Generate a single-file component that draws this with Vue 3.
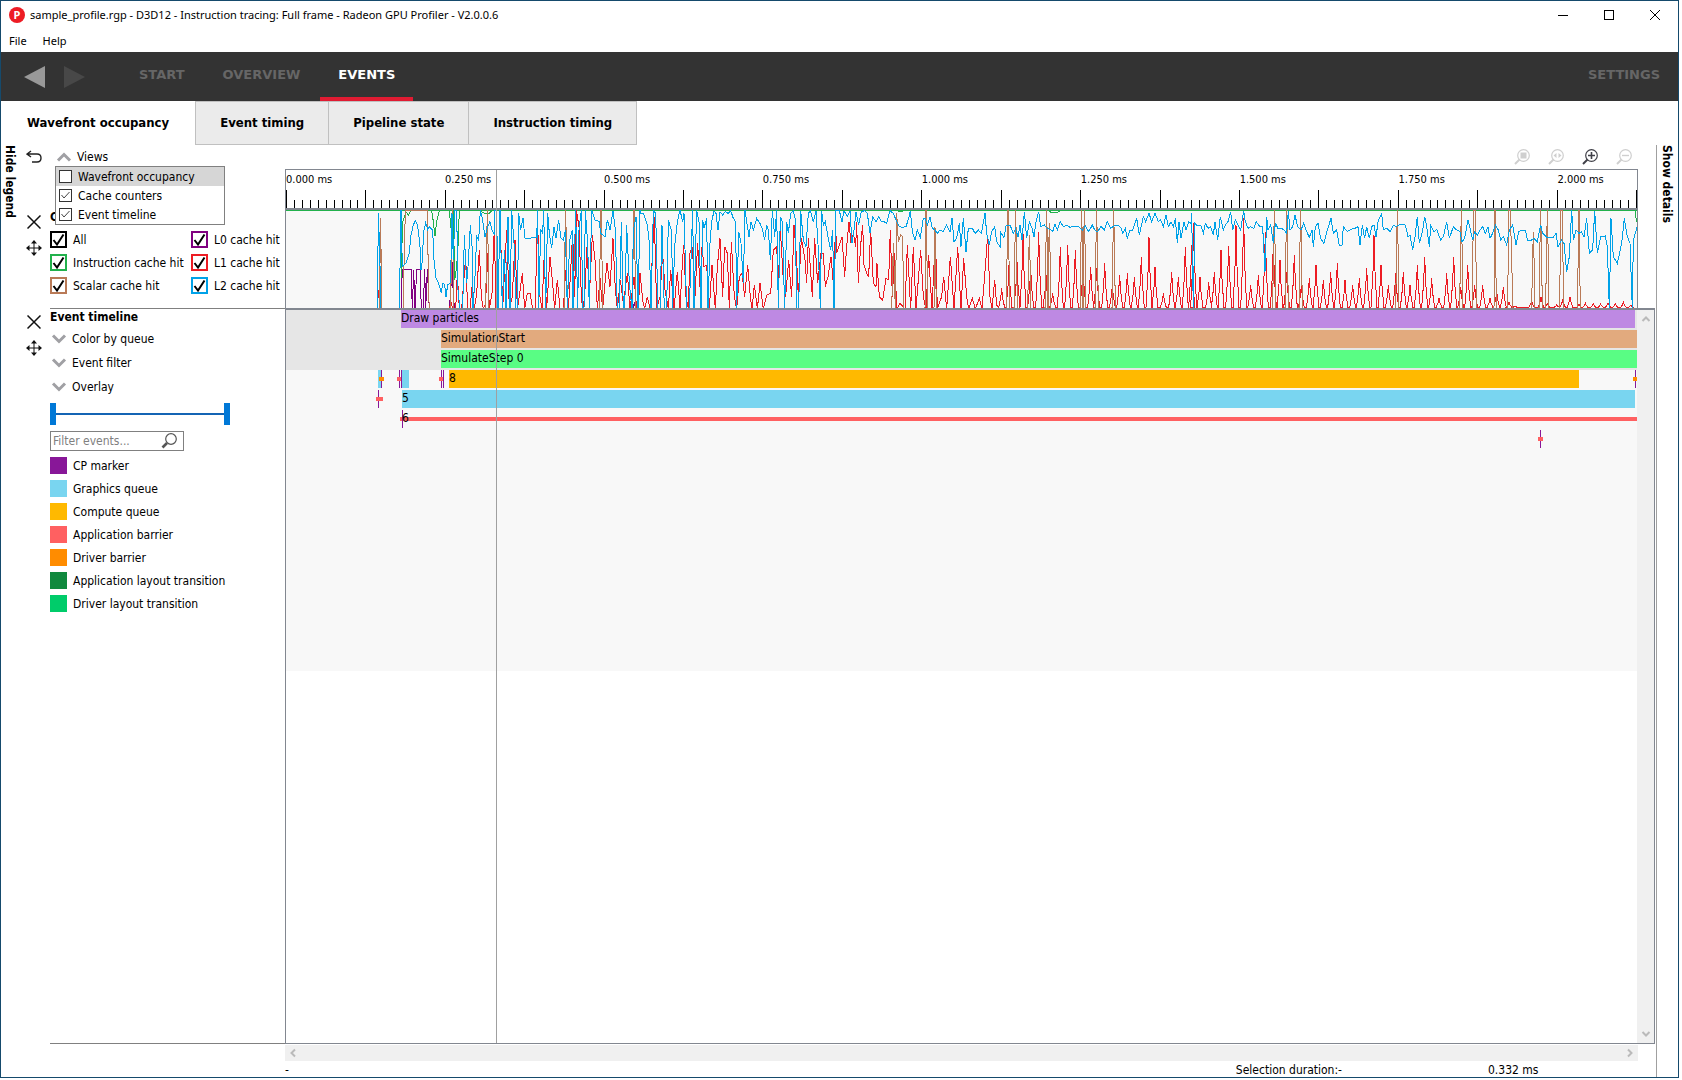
<script setup>
import { ref } from 'vue'

const navItems = ['START', 'OVERVIEW', 'EVENTS']
const tabs = ['Wavefront occupancy', 'Event timing', 'Pipeline state', 'Instruction timing']

const views = ref([
  { name: 'Wavefront occupancy', on: false },
  { name: 'Cache counters', on: true },
  { name: 'Event timeline', on: true },
])

const counters = ref([
  { name: 'All', color: '#000000', on: true },
  { name: 'L0 cache hit', color: '#800080', on: true },
  { name: 'Instruction cache hit', color: '#22b14c', on: true },
  { name: 'L1 cache hit', color: '#ed1c24', on: true },
  { name: 'Scalar cache hit', color: '#b97a57', on: true },
  { name: 'L2 cache hit', color: '#00a2e8', on: true },
])

const foldouts = ['Color by queue', 'Event filter', 'Overlay']

const legend = [
  ['CP marker', '#881798'],
  ['Graphics queue', '#79d5f0'],
  ['Compute queue', '#ffb900'],
  ['Application barrier', '#ff6061'],
  ['Driver barrier', '#ff8c00'],
  ['Application layout transition', '#10893e'],
  ['Driver layout transition', '#00cc6a'],
]

// Time axis: 170 divisions of 0.0125 ms
const DIVISIONS = 170
const ticks = Array.from({ length: DIVISIONS + 1 }, (_, i) => ({
  x: (i / DIVISIONS) * 1350 + 0.5,
  top: i % 10 === 0 ? 0 : 10,
}))
const marks = Array.from({ length: 9 }, (_, i) => ({
  left: ((i * 20) / DIVISIONS) * 100 + '%',
  text: (i * 0.25).toFixed(3) + ' ms',
}))

// Samples are recorded in four blocks, each with its own origin.
// Zero values sit just below the visible plot.
const FLOOR = 297
const BLOCKS = [[-18, 180], [1062, 180], [2142, 180], [3162, 240]]
function samples(block, text) {
  const [dx, dy] = BLOCKS[block]
  return text.trim().split(/\s+/).map((p) => {
    const [x, y] = p.split(',').map(Number)
    return `${x + dx},${y - dy >= 293 ? FLOOR : y - dy}`
  }).join(' ')
}
// Narrow pulses rising from the base line
function pulses(block, text, half, base = FLOOR) {
  const [dx, dy] = BLOCKS[block]
  return text.trim().split(/\s+/).map((p) => {
    const [x, y] = p.split(',').map(Number)
    const mid = (y - dy + base) / 2
    return `${x + dx - half},${base} ${x + dx - 3},${mid} ${x + dx},${y - dy} ${x + dx + 3},${mid} ${x + dx + half},${base}`
  }).join(' ')
}

const l2 = [
  samples(0, `291,474 293,400 295,190 299,300 303,474 358,474 363,180 367,350 372,345 378,340 388,310 392,260 400,225 406,212 412,225 416,250
  420,290 423,360 428,325 430,250 437,218 443,238 448,230 458,240 462,330 468,385 476,400 484,430 488,400 494,403 498,440 503,405 510,400
  513,330 516,190 520,330 525,180 530,182 534,420 540,474 548,474 553,255 560,400 564,350 571,225 577,300 579,474 585,380 590,260 596,270
  601,180 607,205 615,262 622,232 630,215 636,240 643,255 645,180 650,180 654,474 660,180 667,474 673,300 678,474 684,200 690,474 695,180
  702,280 708,474 712,474 716,190 722,240 729,205 735,265 745,265 770,262 773,180 776,474 782,240 788,250 791,180 797,474 803,190 808,250
  815,295 822,230 828,265 836,210 843,265 850,270 856,240 862,474 869,270 877,240 879,474 887,180 893,474 897,240 904,180 908,474 912,474
  916,180 923,280 928,474 935,180 945,210 958,215 962,250 975,260 982,210 990,240 999,183 1006,240 1012,474 1018,474 1024,215 1030,474
  1034,474 1040,225 1048,400 1056,474 1060,240 1068,200 1074,474 1080,180`),
  samples(1, `0,190 10,190 22,225 28,280 33,474 40,180 47,190 54,474 60,474 66,225 73,474 80,474 85,210 95,245 98,474 104,290 112,215
  120,180 128,215 132,190 140,474 148,474 158,180 162,474 170,180 177,215 183,474 188,210 192,235 200,205 204,474 210,280 215,215 222,183
  228,190 234,240 240,185 248,195 256,185 264,190 272,182 280,205 287,215 290,474 296,245 303,280 310,400 315,180 320,215 327,260 333,215
  340,240 350,205 360,220 368,240 374,270 380,225 385,240 391,330 397,182 404,260 410,180 415,474 421,200 427,215 434,474 440,215 445,250
  452,190 460,182 466,210 470,474 476,474 482,182 490,270 498,290 505,190 511,182 520,215 528,182 535,300 541,474 545,182 550,225 556,215
  564,260 572,300 578,240 582,474 588,182 598,182 606,215 612,182 622,200 630,182 636,280 642,240 648,185 656,225 664,185 674,182 682,190
  690,250 698,200 708,215 716,200 724,215 732,215 740,220 750,182 760,190 768,210 778,230 788,232 798,230 806,205 811,182 817,245 825,270
  832,240 841,262 850,205 856,205 862,225 870,200 877,235 885,240 892,250 900,240 910,245 920,225 930,245 936,205 942,275 950,265 958,220
  963,290 970,205 978,305 985,235 997,235 1005,250 1015,240 1024,250 1035,190 1040,250 1048,285 1055,245 1064,230 1070,275 1080,290`),
  samples(2, `0,245 12,262 18,228 30,225 40,250 47,235 54,262 60,225 66,270 73,185 80,265 88,215 96,235 102,260 108,215 116,185 122,230
  133,225 142,235 150,238 158,245 165,222 172,240 181,215 190,230 200,225 210,232 220,228 235,230 247,240 256,228 266,245 277,225 284,240
  292,245 303,230 313,240 322,215 332,235 345,225 353,225 362,232 368,250 376,235 382,265 390,240 398,240 410,205 418,255 430,200 437,215
  447,190 455,215 465,190 475,215 482,210 490,230 498,195 505,230 513,215 520,230 526,205 532,280 537,215 543,265 552,215 558,240 566,215
  573,220 575,190 580,474 584,220 592,228 602,225 610,250 616,220 624,235 632,230 640,255 645,215 653,270 661,200 670,240 676,225 684,215
  692,185 698,240 706,210 712,220 722,240 731,182 736,215 744,235 752,230 762,235 768,215 778,228 788,230 795,365 800,200 804,240 812,225
  820,280 826,220 834,235 845,235 852,240 860,250 865,182 870,240 878,230 885,195 893,230 903,240 911,220 918,240 928,262 936,240 940,290
  946,230 954,220 962,265 972,280 982,240 993,205 1000,250 1010,240`),
  samples(3, `-2,348 6,345 10,290 22,305 32,298 45,295 54,290 60,345 67,285 74,325 80,290 88,325 95,290 102,285 108,320 115,270 125,250
  130,300 140,295 150,305 160,285 168,290 176,285 186,283 196,285 204,320 210,315 218,360 225,320 232,260 238,340 248,300 254,260 260,290
  268,350 272,285 282,305 290,298 302,330 310,320 320,275 328,325 340,290 350,300 360,305 366,335 374,325 384,270 390,295 398,330 404,305
  412,315 420,300 428,290 436,310 444,290 450,325 458,310 466,285 475,300 482,330 490,320 500,345 508,300 518,285 528,345 536,305 546,300
  556,300 562,330 575,330 582,325 592,335 602,285 608,310 620,322 640,322 648,310 654,350 664,330 672,340 680,425 688,380 695,240 700,330
  708,300 717,310 724,305 732,320 740,265 748,370 758,360 764,242 772,370 782,320 796,318 802,350 808,534 813,265 820,380 832,400 845,340
  853,265 862,320 870,340 877,534 880,330 886,310 891,290`),
].join(' ')

const l1 = [
  samples(0, `291,474 295,420 300,474 508,474 513,455 518,474 527,474 532,370 538,474 545,474 557,320 563,474 570,474 577,400 583,474
  590,430 598,300 604,440 610,474 617,460 622,310 628,474 636,430 643,230 648,474 655,380 661,225 668,474 680,240 688,474 697,440 705,270
  712,474 719,430 727,370 734,474 742,430 750,430 758,474 766,474 772,190 780,440 786,474 792,330 800,474 810,320 818,400 824,474 832,390
  840,474 850,474 857,360 865,474 871,380 878,250 884,440 889,180 897,230 904,440 908,474 914,440 921,290 928,440 937,255 945,330 952,474
  960,385 968,474 975,400 981,340 990,410 999,265 1006,420 1012,474 1021,390 1030,460 1042,370 1050,474 1062,380 1070,474 1078,430`),
  samples(1, `0,370 8,450 14,474 22,440 30,474 36,340 43,200 50,474 60,440 68,310 75,420 85,474 92,360 102,474 112,365 120,474 127,340
  131,285 138,440 145,474 150,310 157,290 165,440 173,280 180,410 186,290 192,350 200,345 208,474 216,345 226,474 232,350 240,265 248,440
  254,290 262,310 268,474 274,275 283,440 290,474 298,380 306,370 314,440 323,345 331,440 336,474 343,405 352,474 360,400 370,474 380,435
  392,430 400,300 410,290 415,400 421,240 430,390 437,440 446,330 455,440 462,225 470,330 475,440 484,265 495,330 500,400 505,265 517,440
  524,265 533,400 543,310 550,310 556,410 564,380 573,320 580,400 587,230 590,310 598,285 606,260 614,380 620,290 627,215 633,280 640,250
  647,290 650,215 655,400 662,285 668,225 672,345 680,370 686,380 692,240 700,400 708,410 711,340 718,440 728,450 738,385 746,390 751,240
  757,440 764,310 770,474 780,460 795,474 802,285 812,474 820,290 828,474 842,300 850,440 858,474 866,315 876,474 882,345 886,250 892,474
  905,440 911,380 920,474 931,320 942,474 953,290 963,474 971,325 980,440 986,474 997,445 1006,474 1018,445 1026,474 1035,365 1043,255
  1050,440 1056,474 1064,390 1070,465`),
  pulses(2, `5,415 27,345 51,335 69,250 92,355 116,245 138,375 158,430 181,290 203,285 226,300 249,340 272,350 290,355 314,340 337,405
  359,375 382,370 403,380 424,320 447,262 465,350 490,430 515,365 535,380 556,290 575,285 581,220 600,380 626,395 643,365 663,300 686,288
  708,225 731,205 752,405 775,375 796,245 820,280 840,330 860,365 883,315 904,405 928,385 948,345 970,390 992,365 1012,340`, 9, 293),
  pulses(3, `15,450 38,465 58,445 80,415 102,315 123,405 145,465 167,430 190,425 210,465 232,405 254,380 275,445 297,505 320,430 341,380
  362,470 383,405 404,465 428,465 450,505 470,485 490,470 507,515 525,528 575,512 603,500 622,522 650,525 668,510 690,500 717,522 736,520
  760,522 782,522 804,518 826,522 850,517 873,525`, 9, 293),
].join(' ')

const scalar = [
  samples(0, '298,474 302,205 305,474 370,474 370,430 376,182 443,182 445,440 450,474'),
  pulses(0, '517,180 622,180 857,180 963,180 1062,180', 5),
  samples(1, '755,474 760,280 766,474 770,190 775,275 782,255 788,260 791,474 855,474 858,180 864,474 882,474 885,230 889,474'),
  pulses(2, '24,180 47,180 88,255 140,180 148,220 245,180 253,180 290,180 341,180 823,180 860,180 902,180', 5),
  pulses(3, '172,240 364,240', 5),
  samples(3, '397,534 400,240 407,240 409,534 462,534 464,240 466,240 469,534 503,534 506,240 511,240 519,534'),
  pulses(3, '580,305 602,240 622,240', 5),
  samples(3, '659,534 662,240 668,240 670,534 712,534 717,240 721,534'),
].join(' ')

const l0 = samples(0, `363,474 367,357 393,357 397,474 401,360 405,474 410,357 420,357 424,474 430,474 434,357 437,474 442,357 448,474
  508,474 513,410 516,335 520,440 524,474 1058,474 1063,460 1068,474`)

const instruction = [
  samples(0, `363,474 367,220 372,205 378,185 385,195 392,182 455,182 460,215 465,258 470,215 478,182 508,182 513,235 520,182
  524,390 530,350 534,290 538,182 600,182 608,188 620,192 628,190 636,182`),
  samples(1, '770,182 778,184 786,184 792,182'),
  samples(2, '145,182 153,187 172,187 180,182'),
  samples(3, '886,242 889,275'),
].join(' ')

const traces = [
  [instruction, '#22b14c'],
  [l0, '#800080'],
  [l1, '#ed1c24'],
  [scalar, '#b97a57'],
  [l2, '#00a2e8'],
]

// Events: start and end on a 0..1351 scale
const SPAN = 1351
const lanes = [
  { group: true, items: [{ s: 115, e: 1349, c: '#be89e3', t: 'Draw particles' }] },
  { group: true, items: [{ s: 155, e: 1351, c: '#e2aa7e', t: 'SimulationStart' }] },
  { group: true, items: [{ s: 155, e: 1351, c: '#59fd84', t: 'SimulateStep 0' }] },
  {
    items: [
      { s: 92, e: 95, c: '#79d5f0' }, { s: 95, e: 96, c: '#881798' }, { s: 93, e: 98, c: '#ff8c00', k: 'mark' },
      { s: 113, e: 114, c: '#881798' }, { s: 115, e: 116, c: '#881798' }, { s: 111, e: 115, c: '#ff6061', k: 'mark' },
      { s: 116, e: 123, c: '#79d5f0' },
      { s: 155, e: 156, c: '#881798' }, { s: 157, e: 158, c: '#881798' }, { s: 153, e: 157, c: '#ff6061', k: 'mark' },
      { s: 163, e: 1293, c: '#ffb900', t: '8' },
      { s: 1349, e: 1350, c: '#881798' }, { s: 1347, e: 1351, c: '#ff8c00', k: 'mark' },
    ],
  },
  {
    items: [
      { s: 92, e: 93, c: '#881798' }, { s: 90, e: 97, c: '#ff6061', k: 'mark' },
      { s: 116, e: 1349, c: '#79d5f0', t: '5' },
    ],
  },
  {
    items: [
      { s: 114, e: 1351, c: '#ff6061', k: 'mark' },
      { s: 116, e: 117, c: '#881798', t: '6' },
    ],
  },
  { items: [{ s: 1254, e: 1255, c: '#881798' }, { s: 1252, e: 1257, c: '#ff6061', k: 'mark' }] },
]
const place = (i) => ({
  left: (i.s / SPAN) * 100 + '%',
  width: ((i.e - i.s) / SPAN) * 100 + '%',
  background: i.c,
})

const filter = ref('')
const rangeStart = ref(0)
const rangeEnd = ref(100)
const zoomTools = [
  { name: 'Zoom to selection', kind: 'box', enabled: false },
  { name: 'Zoom reset', kind: 'arrows', enabled: false },
  { name: 'Zoom in', kind: 'plus', enabled: true },
  { name: 'Zoom out', kind: 'minus', enabled: false },
]
</script>

<template>
  <div class="window">
    <header class="titlebar">
      <span class="app-icon">P</span>
      <span class="title">sample_profile.rgp - D3D12 - Instruction tracing: Full frame - Radeon GPU Profiler - V2.0.0.6</span>
      <div class="caption-buttons">
        <button aria-label="Minimize"><svg width="10" height="10"><path d="M0 5.5H10" /></svg></button>
        <button aria-label="Maximize"><svg width="10" height="10"><rect x=".5" y=".5" width="9" height="9" /></svg></button>
        <button aria-label="Close"><svg width="10" height="10"><path d="M0 0L10 10M10 0L0 10" /></svg></button>
      </div>
    </header>
    <nav class="menubar">
      <button>File</button>
      <button>Help</button>
    </nav>

    <nav class="navbar">
      <button class="arrow" aria-label="Back"><svg width="22" height="22"><path d="M0 11L21 0V22Z" fill="#999" /></svg></button>
      <button class="arrow" aria-label="Forward"><svg width="22" height="22"><path d="M21 11L0 0V22Z" fill="#484848" /></svg></button>
      <div class="nav-items">
        <button v-for="n in navItems" :key="n" class="nav-item" :class="{ active: n === 'EVENTS' }">{{ n }}</button>
      </div>
      <button class="nav-item settings">SETTINGS</button>
    </nav>

    <div class="tabs">
      <button v-for="(t, i) in tabs" :key="t" class="tab" :class="{ active: i === 0 }">{{ t }}</button>
    </div>

    <main class="workspace">
      <button class="rail rail-left">Hide legend</button>

      <aside class="legend">
        <div class="legend-top">
          <button class="tool" aria-label="Reset"><svg width="16" height="14" viewBox="0 0 16 14"><path d="M5 1L1 4L5 7M1 4H11Q15 4 15 8T11 12H6" fill="none" stroke="#222" stroke-width="1.4" /></svg></button>
          <button class="foldout">
            <svg width="16" height="10" viewBox="0 0 16 10"><path d="M2 8.500L8 2.500L14 8.500" fill="none" stroke="#a0a0a4" stroke-width="3" /></svg>
            Views
          </button>
          <div class="popup">
            <label v-for="(v, i) in views" :key="v.name" :class="{ hot: i === 0 }">
              <span class="check small">
                <input v-model="v.on" type="checkbox">
                <svg v-if="v.on" viewBox="0 0 13 13"><path d="M2.500 6L5 9L10.500 3" /></svg>
              </span>
              {{ v.name }}
            </label>
          </div>
        </div>

        <section class="pane pane-counters">
          <div class="pane-tools">
            <button class="tool" aria-label="Close pane"><svg width="14" height="14"><path d="M.5.5L13.500 13.500M13.500.5L.5 13.500" stroke="#111" stroke-width="1.500" /></svg></button>
            <button class="tool" aria-label="Move pane"><svg width="16" height="16" viewBox="0 0 16 16"><path d="M8 1V15M1 8H15" stroke="#111" /><path d="M8 0L5 3.500H11ZM8 16L5 12.500H11ZM0 8L3.500 5V11ZM16 8L12.500 5V11Z" fill="#111" /></svg></button>
          </div>
          <div class="pane-body">
            <h2>Cache counters</h2>
            <div class="counter-grid">
              <label v-for="c in counters" :key="c.name">
                <span class="check">
                  <input v-model="c.on" type="checkbox" :style="{ borderColor: c.color }">
                  <svg v-if="c.on" viewBox="0 0 17 17"><path d="M3.500 9L7 13.500L13.500 3.500" /></svg>
                </span>
                {{ c.name }}
              </label>
            </div>
          </div>
        </section>

        <section class="pane pane-events">
          <div class="pane-tools">
            <button class="tool" aria-label="Close pane"><svg width="14" height="14"><path d="M.5.5L13.500 13.500M13.500.5L.5 13.500" stroke="#111" stroke-width="1.500" /></svg></button>
            <button class="tool" aria-label="Move pane"><svg width="16" height="16" viewBox="0 0 16 16"><path d="M8 1V15M1 8H15" stroke="#111" /><path d="M8 0L5 3.500H11ZM8 16L5 12.500H11ZM0 8L3.500 5V11ZM16 8L12.500 5V11Z" fill="#111" /></svg></button>
          </div>
          <div class="pane-body">
            <h2>Event timeline</h2>
            <button v-for="f in foldouts" :key="f" class="foldout">
              <svg width="16" height="10" viewBox="0 0 16 10"><path d="M2 1.500L8 7.500L14 1.500" fill="none" stroke="#a0a0a4" stroke-width="3" /></svg>
              {{ f }}
            </button>
            <div class="range">
              <input v-model="rangeStart" type="range" min="0" max="100" aria-label="Minimum duration">
              <input v-model="rangeEnd" type="range" min="0" max="100" aria-label="Maximum duration">
            </div>
            <div class="search">
              <input v-model="filter" type="text" placeholder="Filter events..." aria-label="Filter events">
              <svg width="16" height="16" viewBox="0 0 16 16"><circle cx="10" cy="6" r="5.300" fill="none" stroke="#555" stroke-width="1.200" /><path d="M6 10L1.500 14.500" stroke="#555" stroke-width="2.600" /></svg>
            </div>
            <ul class="swatches">
              <li v-for="[name, color] in legend" :key="name"><i :style="{ background: color }"></i>{{ name }}</li>
            </ul>
          </div>
        </section>
      </aside>

      <section class="timeline">
        <div class="zoom-tools">
          <button v-for="z in zoomTools" :key="z.name" :aria-label="z.name" :disabled="!z.enabled">
            <svg width="16" height="16" viewBox="0 0 16 16">
              <circle cx="9.500" cy="6.500" r="5.800" fill="none" stroke-width="1.200" stroke="currentColor" />
              <path d="M5.500 10.500L1 15" stroke="currentColor" stroke-width="2" />
              <rect v-if="z.kind === 'box'" x="6.500" y="3.500" width="6" height="6" fill="currentColor" />
              <path v-else-if="z.kind === 'arrows'" d="M5.500 6.500L8.500 4V9ZM13.500 6.500L10.500 4V9Z" fill="currentColor" />
              <path v-else-if="z.kind === 'plus'" d="M6 6.500H13M9.500 3V10" stroke="currentColor" stroke-width="1.600" />
              <path v-else d="M6 6.500H13" stroke="currentColor" stroke-width="1.400" />
            </svg>
          </button>
        </div>

        <div class="plots">
          <div class="ruler">
            <span v-for="m in marks" :key="m.text" class="mark-label" :style="{ left: m.left }">{{ m.text }}</span>
            <svg class="ticks" viewBox="0 0 1351 18" preserveAspectRatio="none">
              <line v-for="t in ticks" :key="t.x" :x1="t.x" :x2="t.x" :y1="t.top" y2="18" />
            </svg>
          </div>
          <svg class="chart" viewBox="0 0 4053 294" preserveAspectRatio="none">
            <polyline v-for="[p, color] in traces" :key="color" :points="p" :stroke="color" />
          </svg>
          <div class="events">
            <div class="lanes">
              <div v-for="(lane, n) in lanes" :key="n" class="lane" :class="{ group: lane.group }">
                <div v-for="(item, k) in lane.items" :key="k" class="event" :class="item.k" :style="place(item)">{{ item.t }}</div>
              </div>
            </div>
            <div class="vscroll">
              <svg width="10" height="6" viewBox="0 0 10 6"><path d="M1.500 5L5 1.500L8.500 5" /></svg>
              <svg width="10" height="6" viewBox="0 0 10 6"><path d="M1.500 1L5 4.500L8.500 1" /></svg>
            </div>
          </div>
          <div class="cursor"></div>
        </div>

        <div class="hscroll">
          <svg width="6" height="10" viewBox="0 0 6 10"><path d="M5 1.500L1.500 5L5 8.500" /></svg>
          <svg width="6" height="10" viewBox="0 0 6 10"><path d="M1 1.500L4.500 5L1 8.500" /></svg>
        </div>
        <footer class="status">
          <span class="hint">-</span>
          <span class="selection">Selection duration:-</span>
          <span class="time">0.332 ms</span>
        </footer>
      </section>

      <button class="rail rail-right">Show details</button>
    </main>
  </div>
</template>

<style>
body {
  margin: 0;
  background: #fff;
}
</style>

<style scoped>
.window {
  box-sizing: border-box;
  display: flex;
  flex-direction: column;
  min-height: calc(100vh - 2px);
  margin-right: 3px;
  border: 1px solid #154a6c;
  color: #000;
  font: 12px/16px "DejaVu Sans Condensed", "DejaVu Sans", sans-serif;
}
button {
  padding: 0;
  border: 0;
  background: none;
  color: inherit;
  font: inherit;
}
svg {
  display: block;
  flex: none;
}

/* Title and menus */
.titlebar {
  display: flex;
  align-items: center;
  height: 28px;
  padding-left: 8px;
  font: 11px/16px "Noto Sans", sans-serif;
}
.app-icon {
  width: 16px;
  margin-right: 5px;
  border-radius: 50%;
  background: #ed1c24;
  color: #fff;
  font-weight: bold;
  text-align: center;
}
.caption-buttons {
  display: flex;
  margin-left: auto;
}
.caption-buttons button {
  display: flex;
  justify-content: center;
  width: 46px;
}
.caption-buttons svg {
  fill: none;
  stroke: #000;
}
.menubar {
  display: flex;
  gap: 16px;
  height: 23px;
  padding-left: 8px;
  font: 11px/24px "Noto Sans", sans-serif;
}
.navbar {
  display: flex;
  align-items: center;
  height: 49px;
  padding-left: 23px;
  background: #333;
}
.arrow {
  margin-right: 18px;
}
.nav-items {
  display: flex;
  margin-left: 17px;
  gap: 2px;
}
.nav-item {
  box-sizing: border-box;
  height: 49px;
  padding: 0 18px;
  border-bottom: 4px solid transparent;
  color: #666;
  font: bold 13px/16px "DejaVu Sans", sans-serif;
}
.nav-item.active {
  border-bottom-color: #e01b32;
  color: #fff;
}
.settings {
  margin-left: auto;
}
.tabs {
  display: flex;
  height: 44px;
}
.tab {
  box-sizing: border-box;
  padding: 0 24px;
  border: solid #c0c0c0;
  border-width: 1px 0 1px 1px;
  background: #ebebeb;
  font-size: 13px;
  font-weight: bold;
}
.tab:last-child {
  border-right-width: 1px;
}
.tab.active {
  padding: 0 26px 0 25px;
  border-color: transparent;
  background: #fff;
}

/* Workspace */
.workspace {
  display: flex;
  flex: 1;
}
.rail {
  flex: none;
  writing-mode: vertical-rl;
  font-weight: bold;
  text-align: left;
}
.rail-left {
  width: 20px;
  padding-right: 2px;
}
.rail-right {
  width: 22px;
  margin-left: 1px;
  padding-right: 2px;
  border-left: 1px solid #a0a0a0;
}
.legend {
  display: flex;
  flex: none;
  flex-direction: column;
  width: 264px;
}
.legend-top {
  position: relative;
  display: flex;
  align-items: center;
  height: 24px;
  padding-left: 5px;
}
.tool {
  display: flex;
  justify-content: center;
  width: 16px;
}
.foldout {
  display: flex;
  align-items: center;
  gap: 5px;
  height: 24px;
}
.legend-top .foldout {
  margin-left: 14px;
}
.popup {
  position: absolute;
  z-index: 2;
  top: 21px;
  left: 34px;
  width: 168px;
  border: 1px solid #808080;
  background: #fff;
}
.popup label {
  display: flex;
  align-items: center;
  gap: 6px;
  height: 19px;
  padding-left: 3px;
}
.popup .hot {
  background: #d6d6d6;
}
.check {
  position: relative;
  flex: none;
  width: 17px;
  height: 17px;
}
.check input {
  box-sizing: border-box;
  display: block;
  width: 100%;
  height: 100%;
  margin: 0;
  border: 2px solid;
  background: #fff;
  appearance: none;
}
.check svg {
  position: absolute;
  inset: 0;
  fill: none;
  stroke: #000;
  stroke-width: 2;
}
.check.small {
  width: 13px;
  height: 13px;
}
.check.small input {
  border: 1px solid #333;
}
.check.small svg {
  stroke: #444;
  stroke-width: 1;
}
.pane {
  display: flex;
}
.pane-counters {
  height: 140px;
}
.pane-events {
  flex: 1;
  margin-bottom: 33px;
}
.pane-tools {
  display: flex;
  flex-direction: column;
  gap: 11px;
  width: 24px;
  padding: 6px 0 0 5px;
}
.pane-counters .pane-tools {
  padding-top: 46px;
}
.pane-body {
  flex: 1;
  border-bottom: 1px solid #808080;
}
h2 {
  margin: 0;
  font-size: 12px;
  line-height: 16px;
}
.pane-counters h2 {
  margin: 40px 0 6px;
}
.pane-events h2 {
  margin-bottom: 2px;
}
.counter-grid {
  display: grid;
  grid-template-columns: 141px auto;
  row-gap: 6px;
}
.counter-grid label {
  display: flex;
  align-items: center;
  gap: 6px;
  height: 17px;
  white-space: nowrap;
}
.pane-events .foldout {
  margin-left: 1px;
}
.range {
  position: relative;
  width: 180px;
  height: 22px;
  margin-top: 4px;
  background: linear-gradient(#1464b4, #1464b4) center / 100% 2px no-repeat;
}
.range input {
  position: absolute;
  inset: 0;
  width: 180px;
  height: 22px;
  margin: 0;
  background: none;
  appearance: none;
  pointer-events: none;
}
.range input::-webkit-slider-thumb {
  width: 6px;
  height: 22px;
  background: #0078d7;
  appearance: none;
  pointer-events: auto;
}
.search {
  box-sizing: border-box;
  display: flex;
  align-items: center;
  width: 134px;
  height: 20px;
  margin: 6px 0;
  padding: 0 6px 0 2px;
  border: 1px solid #808080;
}
.search input {
  flex: 1;
  min-width: 0;
  padding: 0;
  border: 0;
  outline: 0;
  background: none;
  font: inherit;
}
.search input::placeholder {
  color: #808080;
}
.swatches {
  display: grid;
  gap: 6px;
  margin: 0;
  padding: 0;
  list-style: none;
}
.swatches li {
  display: flex;
  align-items: center;
  gap: 6px;
  height: 17px;
}
.swatches i {
  width: 17px;
  height: 17px;
}

/* Timeline */
.timeline {
  display: flex;
  flex: 1;
  flex-direction: column;
  min-width: 0;
}
.zoom-tools {
  display: flex;
  justify-content: flex-end;
  align-items: center;
  gap: 18px;
  height: 24px;
  padding-right: 23px;
}
.zoom-tools button {
  color: #404048;
}
.zoom-tools button:disabled {
  color: #cfcfcf;
}
.plots {
  position: relative;
  display: flex;
  flex: 1;
  flex-direction: column;
}
.ruler {
  position: relative;
  height: 38px;
  margin-right: 17px;
  border: solid #828790;
  border-width: 1px 1px 2px;
  overflow: hidden;
}
.mark-label {
  position: absolute;
  top: 2px;
  font-size: 11px;
}
.ticks {
  position: absolute;
  bottom: 0;
  left: 0;
  width: 100%;
  height: 18px;
  stroke: #000;
  shape-rendering: crispEdges;
}
.ticks line,
.chart polyline {
  vector-effect: non-scaling-stroke;
}
.chart {
  box-sizing: border-box;
  width: calc(100% - 17px);
  height: 98px;
  border: solid #828790;
  border-width: 0 1px;
  background: linear-gradient(#22b14c, #22b14c) top / 100% 1px no-repeat #f8f8f8;
  fill: none;
  shape-rendering: crispEdges;
}
.events {
  display: flex;
  flex: 1;
  border: solid #828790;
  border-width: 2px 1px 1px;
  background: linear-gradient(#f8f8f8, #f8f8f8) top / 100% 361px no-repeat;
}
.lanes {
  flex: 1;
}
.lane {
  position: relative;
  height: 20px;
}
.lane.group {
  background: #e6e6e6;
}
.event {
  position: absolute;
  top: 0;
  height: 18px;
  white-space: nowrap;
}
.event.mark {
  top: 7px;
  height: 4px;
}
.vscroll {
  display: flex;
  flex-direction: column;
  justify-content: space-between;
  align-items: center;
  box-sizing: border-box;
  width: 17px;
  padding: 6px 0;
  background: #f0f0f0;
}
.vscroll svg,
.hscroll svg {
  fill: none;
  stroke: #bababa;
  stroke-width: 2;
}
.cursor {
  position: absolute;
  top: 1px;
  bottom: 1px;
  left: 211px;
  width: 1px;
  background: #a0a0a0;
}
.hscroll {
  display: flex;
  justify-content: space-between;
  align-items: center;
  height: 16px;
  margin: 1px 17px 0 0;
  padding: 0 5px;
  background: #f0f0f0;
}
.status {
  display: flex;
  height: 16px;
  line-height: 18px;
}
.selection {
  margin-left: auto;
}
.time {
  width: 167px;
  margin-left: 146px;
}
</style>
